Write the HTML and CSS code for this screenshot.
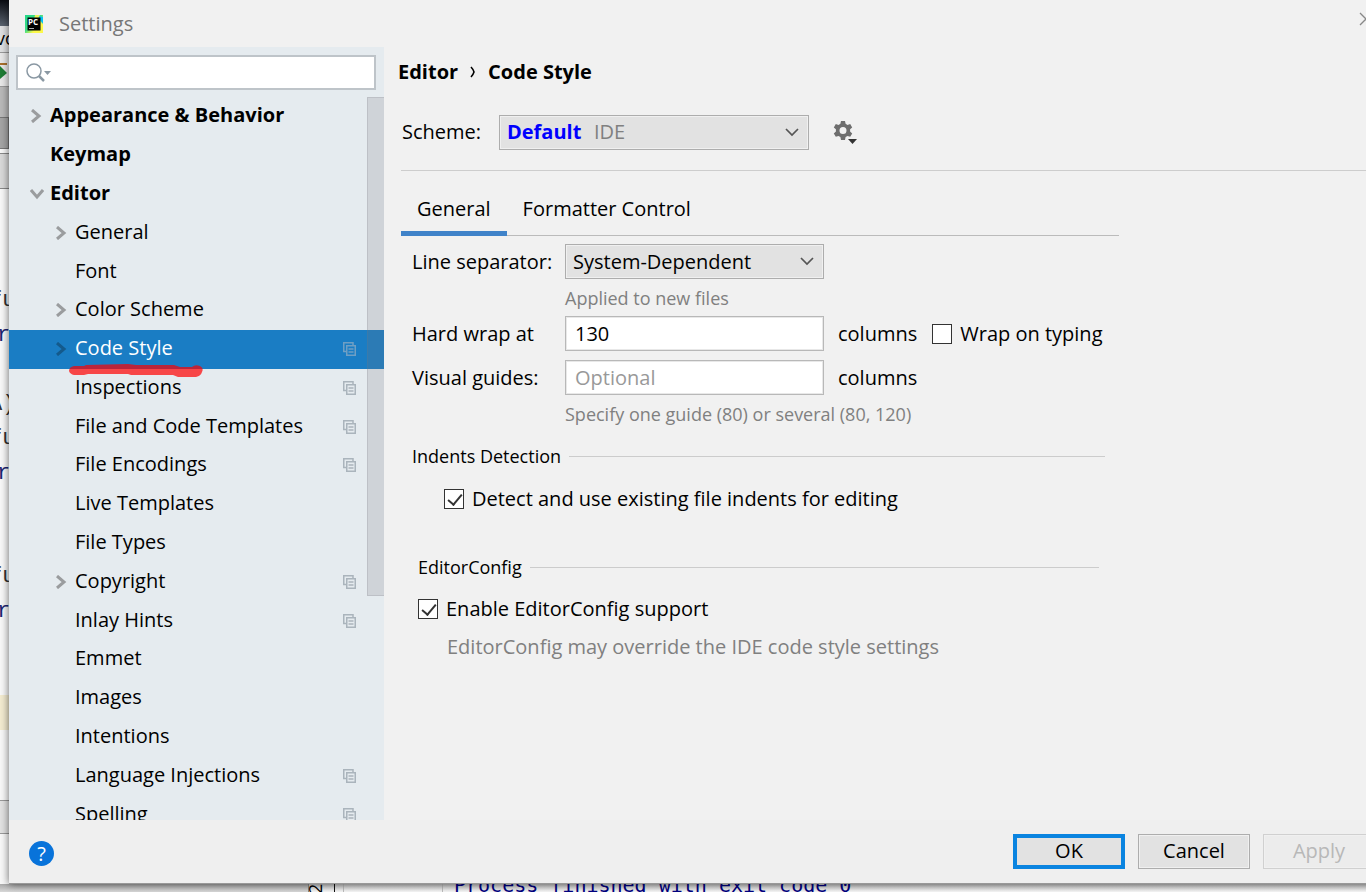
FILE: index.html
```html
<!DOCTYPE html>
<html lang="en">
<head>
<meta charset="utf-8">
<title>Settings</title>
<link rel="stylesheet" href="styles.css">
</head>
<body>
<svg class="defs" aria-hidden="true">
  <symbol id="right" viewBox="0 0 12 14"><path d="M2 1l7 6-7 6" fill="none" stroke="currentColor" stroke-width="3"/></symbol>
  <symbol id="down" viewBox="0 0 14 12"><path d="M1 2l6 7 6-7" fill="none" stroke="currentColor" stroke-width="3"/></symbol>
  <symbol id="copy" viewBox="0 0 13 14"><path d="M3 9.5H.75V.75H10V3" fill="none" stroke="currentColor" stroke-width="1.5"/><path d="M3.75 3.75h8.5v9.5h-8.5zM5.5 7h5M5.5 10h5" fill="none" stroke="currentColor" stroke-width="1.5"/></symbol>
  <symbol id="chev" viewBox="0 0 14 9"><path d="M1 1l6 6 6-6" fill="none" stroke="currentColor" stroke-width="1.7"/></symbol>
</svg>

<div class="desktop">
  <div class="ide-left" aria-hidden="true">
    <div class="ide-title"></div>
    <div class="ide-menu">vo</div>
    <div class="ide-tool"><svg width="9" height="34" viewBox="0 0 9 34"><path d="M0 11h7" stroke="#a9702c" stroke-width="2"/><path d="M0 13l7 7-7 6z" fill="#1e7d34"/></svg></div>
    <div class="ide-nav"></div>
    <div class="ide-button"></div>
    <div class="ide-tabs"></div>
    <div class="ide-blank"></div>
    <div class="ide-code">
      <span class="cut">fu</span><span class="key">r</span><span></span><span class="cut">A)</span><span class="cut">fu</span><span class="key">r</span><span></span><span></span><span class="cut">fu</span><span class="key">r</span>
    </div>
    <div class="ide-caret"></div>
    <div class="ide-status"></div>
  </div>

  <main class="dialog">
    <header class="title-bar">
      <svg class="logo" width="18" height="18" viewBox="0 0 18 18">
        <defs><linearGradient id="lg" x1="0" y1="0" x2="1" y2="1"><stop offset="0" stop-color="#21d789"/><stop offset=".45" stop-color="#3ddc84"/><stop offset=".7" stop-color="#fcf84a"/><stop offset="1" stop-color="#fcf84a"/></linearGradient></defs>
        <rect width="18" height="18" fill="url(#lg)"/><path d="M11 0l7 2v7L14 4z" fill="#07c3f2"/><path d="M10 0h5l-2 4h-4z" fill="#e8f25a"/>
        <rect x="2.500" y="2.500" width="13" height="13" fill="#000"/>
        <text x="3" y="10" font-size="8" font-weight="700" fill="#fff">PC</text><path d="M4 13.500h5" stroke="#aaa"/>
      </svg>
      <h1>Settings</h1>
      <button class="close" aria-label="Close"><svg width="14" height="14" viewBox="0 0 14 14"><path d="M1 1l12 12M13 1L1 13" stroke="#888" stroke-width="1.300"/></svg></button>
    </header>

    <aside class="sidebar">
      <label class="search">
        <svg width="26" height="20" viewBox="0 0 26 20"><circle cx="8" cy="8" r="7" fill="none" stroke="#8a98a3" stroke-width="1.500"/><path d="M13 13l5 5" stroke="#8a98a3" stroke-width="2.500"/><path d="M18 8h7l-3.500 4z" fill="#8a98a3"/></svg>
        <input type="text" aria-label="Search settings">
      </label>
      <div class="tree-view">
        <ul class="tree">
          <li class="top"><svg class="arrow"><use href="#right"/></svg><span>Appearance &amp; Behavior</span></li>
          <li class="top"><i class="arrow"></i><span>Keymap</span></li>
          <li class="top"><svg class="arrow open"><use href="#down"/></svg><span>Editor</span></li>
          <li><svg class="arrow"><use href="#right"/></svg><span>General</span></li>
          <li><i class="arrow"></i><span>Font</span></li>
          <li><svg class="arrow"><use href="#right"/></svg><span>Color Scheme</span></li>
          <li class="selected"><svg class="arrow"><use href="#right"/></svg><span>Code Style</span><svg class="copy"><use href="#copy"/></svg>
            <svg class="marker" width="136" height="16" viewBox="0 0 136 16"><path d="M1 7q0-4 5-5h10l2-1 42-1 8 1h38l6 2h12q3-3 8-1 4 2 2 6-1 4-6 5h-18l-5-2H63l-3-1H20l-4 1H6q-4-1-5-4z" fill="#f00" fill-opacity=".7"/></svg></li>
          <li><i class="arrow"></i><span>Inspections</span><svg class="copy"><use href="#copy"/></svg></li>
          <li><i class="arrow"></i><span>File and Code Templates</span><svg class="copy"><use href="#copy"/></svg></li>
          <li><i class="arrow"></i><span>File Encodings</span><svg class="copy"><use href="#copy"/></svg></li>
          <li><i class="arrow"></i><span>Live Templates</span></li>
          <li><i class="arrow"></i><span>File Types</span></li>
          <li><svg class="arrow"><use href="#right"/></svg><span>Copyright</span><svg class="copy"><use href="#copy"/></svg></li>
          <li><i class="arrow"></i><span>Inlay Hints</span><svg class="copy"><use href="#copy"/></svg></li>
          <li><i class="arrow"></i><span>Emmet</span></li>
          <li><i class="arrow"></i><span>Images</span></li>
          <li><i class="arrow"></i><span>Intentions</span></li>
          <li><i class="arrow"></i><span>Language Injections</span><svg class="copy"><use href="#copy"/></svg></li>
          <li><i class="arrow"></i><span>Spelling</span><svg class="copy"><use href="#copy"/></svg></li>
        </ul>
        <div class="thumb"></div>
      </div>
    </aside>

    <section class="content">
      <nav class="crumbs"><span>Editor</span><svg width="6" height="12" viewBox="0 0 6 12"><path d="M1 1q2 2 3 5-1 3-3 5" fill="none" stroke="#000" stroke-width="1.600"/></svg><span>Code Style</span></nav>
      <div class="scheme">
        <label for="scheme">Scheme:</label>
        <div class="combo wide"><select id="scheme" class="blue"><option>Default</option></select><span class="origin">IDE</span><svg class="chev"><use href="#chev"/></svg></div>
        <button class="gear" aria-label="Scheme actions"><svg width="24" height="24" viewBox="0 0 24 24"><path fill="#6e6e6e" fill-rule="evenodd" d="M8 1h4l.6 2.800 1.900 1.100 2.700-.9 2 3.400-2.100 1.900v2.200l2.100 1.900-2 3.400-2.700-.9-1.900 1.100L12 20H8l-.6-3-1.900-1.100-2.700.9-2-3.400 2.100-1.900V9.300L.8 7.400l2-3.400 2.700.9 1.900-1.100zM10 7a3.500 3.500 0 1 0 0 7 3.500 3.500 0 0 0 0-7z"/><path d="M15 19h9l-4.500 5z" fill="#333"/></svg></button>
      </div>
      <div class="tabs" role="tablist">
        <button class="tab active" role="tab" aria-selected="true">General</button>
        <button class="tab" role="tab" aria-selected="false">Formatter Control</button>
      </div>
      <form class="general">
        <label for="sep">Line separator:</label>
        <div class="combo"><select id="sep"><option>System-Dependent</option></select><svg class="chev"><use href="#chev"/></svg></div>
        <p class="hint">Applied to new files</p>
        <label for="wrap">Hard wrap at</label>
        <input id="wrap" class="field" type="text" value="130">
        <div class="after"><span>columns</span><label class="check"><input type="checkbox">Wrap on typing</label></div>
        <label for="guides">Visual guides:</label>
        <input id="guides" class="field" type="text" placeholder="Optional">
        <div class="after"><span>columns</span></div>
        <p class="hint low">Specify one guide (80) or several (80, 120)</p>
      </form>
      <section class="group indents">
        <h2>Indents Detection</h2>
        <label class="check"><input type="checkbox" checked>Detect and use existing file indents for editing</label>
      </section>
      <section class="group config">
        <h2>EditorConfig</h2>
        <label class="check"><input type="checkbox" checked>Enable EditorConfig support</label>
        <p class="note">EditorConfig may override the IDE code style settings</p>
      </section>
    </section>

    <footer class="footer">
      <button class="help" aria-label="Help"><span>?</span></button>
      <div class="actions">
        <button class="btn primary">OK</button>
        <button class="btn">Cancel</button>
        <button class="btn" disabled>Apply</button>
      </div>
    </footer>
  </main>

  <div class="ide-bottom" aria-hidden="true">
    <div class="ide-bar"></div>
    <div class="ide-side"><span>2</span></div>
    <div class="ide-icons"></div>
    <div class="ide-console">Process finished with exit code 0</div>
  </div>
</div>
</body>
</html>
```
FILE: styles.css
```css
* { box-sizing: border-box; }
body {
  margin: 0;
  overflow: hidden;
  font: 20px/28px "Open Sans", "Noto Sans", sans-serif;
  color: #000;
}
button, input, select { font: inherit; color: inherit; margin: 0; }
button { border: 0; background: none; padding: 0; }
h1, h2, p, ul { margin: 0; padding: 0; font-weight: 400; }
.defs { position: absolute; width: 0; height: 0; }

.desktop {
  display: grid;
  grid-template-columns: 9px minmax(0, 1fr);
  grid-template-rows: minmax(0, 1fr) 8px;
  height: 100vh;
  background: #fff;
}

/* IDE window behind the dialog */
.ide-left { display: flex; flex-direction: column; overflow: hidden; background: #f8f8f8; }
.ide-left > div { flex: none; }
.ide-title { height: 26px; background: linear-gradient(#0a0c12, #5b6470); }
.ide-menu { height: 27px; line-height: 24px; font-size: 18px; text-indent: -4px; background: #dfe0e1; border-bottom: 1px solid #999; }
.ide-tool { height: 34px; background: #e8e8e8; border-bottom: 1px solid #999; }
.ide-tool svg { display: block; }
.ide-nav { height: 30px; background: #b9b9b9; }
.ide-button { height: 32px; background: #a5a5a5; border: 1px solid #777; border-left: 0; }
.ide-tabs { height: 36px; margin-top: 4px; background: #d9d9d9; border: 1px solid #888; border-width: 1px 0; }
.ide-blank { height: 95px; }
.ide-code { display: grid; grid-template-rows: repeat(10, 1fr); height: 345px; font: 22px/34px "Liberation Mono", monospace; color: #333; white-space: nowrap; }
.cut { text-indent: -11px; }
.key { text-indent: -3px; color: #1c2470; }
.ide-caret { height: 35px; margin: 66px 0 70px; background: #f3ebd0; }
.ide-status { height: 34px; background: #e2e2e2; border: 1px solid #999; border-width: 1px 0; }
.ide-bottom { grid-column: 1 / -1; display: flex; overflow: hidden; background: linear-gradient(#c4c4c4, #f7f7f7); }
.ide-bar { width: 309px; background: linear-gradient(#aaa, #d8d8d8); border-right: 1px solid #888; }
.ide-side { width: 26px; border-right: 1px solid #111; font-size: 18px; line-height: 12px; }
.ide-side span { display: block; width: 24px; height: 10px; writing-mode: vertical-rl; transform: rotate(180deg); }
.ide-icons { width: 100px; margin-left: 8px; border: 1px solid #bbb; border-width: 0 1px; }
.ide-console { margin: -9px 0 0 11px; font: 20px/20px "DejaVu Sans Mono", monospace; color: #000080; white-space: nowrap; }

/* Dialog */
.dialog {
  position: relative;
  display: grid;
  grid-template: "title title" 47px "side main" minmax(0, 1fr) "foot foot" 64px / 375px 1fr;
  margin-right: -24px;
  min-height: 0;
  background: #f1f1f1;
  box-shadow: 0 0 8px rgba(0, 0, 0, .6);
}
.title-bar { grid-area: title; display: flex; align-items: center; padding: 0 17px 0 16px; }
.title-bar h1 { margin-left: 16px; font-size: 20px; color: #777; flex: 1; }
.close { height: 14px; align-self: flex-start; margin-top: 12px; }
.close svg { display: block; }

.sidebar { grid-area: side; display: flex; flex-direction: column; background: #e5ebef; min-height: 0; }
.search { display: flex; align-items: center; flex: none; height: 35px; margin: 8px 8px 7px 7px; padding-left: 8px; background: #fff; border: 2px solid #bec4c9; }
.search input { flex: 1; border: 0; outline: 0; background: none; min-width: 0; }
.tree-view { position: relative; flex: 1; overflow: hidden; min-height: 0; }
.tree { display: grid; grid-template-rows: repeat(19, 1fr); height: 737px; list-style: none; }
.tree li { position: relative; display: flex; align-items: center; padding: 0 28px 0 46px; }
.tree li > span { flex: 1; margin-left: 8px; padding-bottom: 2px; white-space: nowrap; }
.tree .top { padding-left: 21px; font-weight: 700; }
.arrow { width: 12px; height: 14px; color: #9a9c9e; }
.arrow.open { width: 14px; height: 12px; margin-right: -2px; }
.copy { width: 13px; height: 14px; color: #aab4bc; }
.tree .selected { background: #1a7dc4; color: #fff; }
.selected .arrow { color: #145a8c; }
.selected .copy { color: #6f9fc4; }
.marker { position: absolute; left: 59px; top: 34px; z-index: 1; }
.thumb { position: absolute; right: 0; top: 0; width: 17px; height: 499px; background: rgba(120, 115, 125, .2); border: 1px solid rgba(120, 120, 130, .2); border-right: 0; }

.content { grid-area: main; padding: 11px 0 0 17px; min-width: 0; }
.crumbs { display: flex; align-items: center; gap: 12px; margin-left: -3px; font-weight: 700; }
.scheme { display: flex; align-items: center; height: 85px; padding-top: 8px; border-bottom: 1px solid #cdcdcd; }
.scheme > label { width: 98px; padding-left: 1px; }
.combo { position: relative; height: 35px; }
.combo.wide { width: 310px; }
.combo select { appearance: none; display: block; width: 100%; height: 35px; padding: 0 30px 0 7px; background: #e2e2e2; border: 1px solid #adadad; border-radius: 0; box-shadow: inset 0 0 0 1px #f0f0f0; }
.combo select.blue { color: #00f; font-weight: 700; }
.origin { position: absolute; left: 95px; top: 3px; color: #808080; pointer-events: none; }
.chev { position: absolute; right: 10px; top: 13px; width: 14px; height: 9px; color: #555; pointer-events: none; }
.gear { height: 24px; margin-left: 24px; }
.gear svg { display: block; }

.tabs { display: flex; height: 65px; max-width: 718px; padding-top: 12px; border-bottom: 1px solid #bbb; }
.tab { height: 53px; padding: 0 16px 2px; }
.tab.active { border-bottom: 5px solid #4083c9; padding: 3px 16px 0; }

.general { display: grid; grid-template-columns: 153px 259px 1fr; grid-template-rows: 35px 37px 35px 9px 35px 38px; align-items: center; margin: 8px 0 0 11px; max-width: 707px; }
.general .combo, .general .field { grid-column: 2; }
.field { width: 100%; height: 35px; padding: 0 9px; background: #fff; border: 1px solid #b8b8b8; border-radius: 0; box-shadow: inset 0 0 0 1px #e8e8e8; }
.field::placeholder { color: #999; }
.hint { grid-column: 2 / -1; font-size: 18px; color: #808080; }
.hint.low { grid-row: 6; }
.general > label[for="guides"], #guides, #guides + .after { grid-row: 5; }
.after { display: flex; padding-left: 14px; gap: 15px; white-space: nowrap; }
.check { display: flex; align-items: center; gap: 8px; }
.check input { appearance: none; position: relative; flex: none; width: 20px; height: 20px; border: 1px solid #333; border-radius: 0; background: #fff; }
.check input:checked::before { content: ""; position: absolute; left: 6px; top: 1px; width: 6px; height: 12px; border: solid #333; border-width: 0 2px 2px 0; transform: rotate(40deg); }

.group h2 { display: flex; align-items: center; gap: 8px; font-size: 18px; }
.group h2::after { content: ""; flex: 1; height: 1px; background: #ccc; }
.indents { margin: 9px 0 0 11px; max-width: 693px; }
.indents .check { margin: 15px 0 0 32px; }
.config { margin: 40px 0 0 17px; max-width: 681px; }
.config .check { margin-top: 14px; }
.note { margin: 10px 0 0 29px; color: #808080; }

.footer { grid-area: foot; display: flex; align-items: center; padding: 0 15px 0 20px; background: #efefef; border-bottom: 1px solid #999; }
.help { width: 25px; height: 25px; border-radius: 50%; background: #0873da; color: #fff; line-height: 25px; margin-top: 4px; }
.actions { display: flex; gap: 13px; margin-left: auto; }
.btn { width: 112px; height: 35px; padding-bottom: 2px; background: #e2e2e2; border: 1px solid #adadad; box-shadow: inset 0 0 0 1px #f0f0f0; }
.btn.primary { border: 4px solid #0a84e0; box-shadow: none; padding-bottom: 2px; line-height: 20px; }
.btn:disabled { background: #ececec; border-color: #d0d0d0; color: #b8b8b8; }
```
